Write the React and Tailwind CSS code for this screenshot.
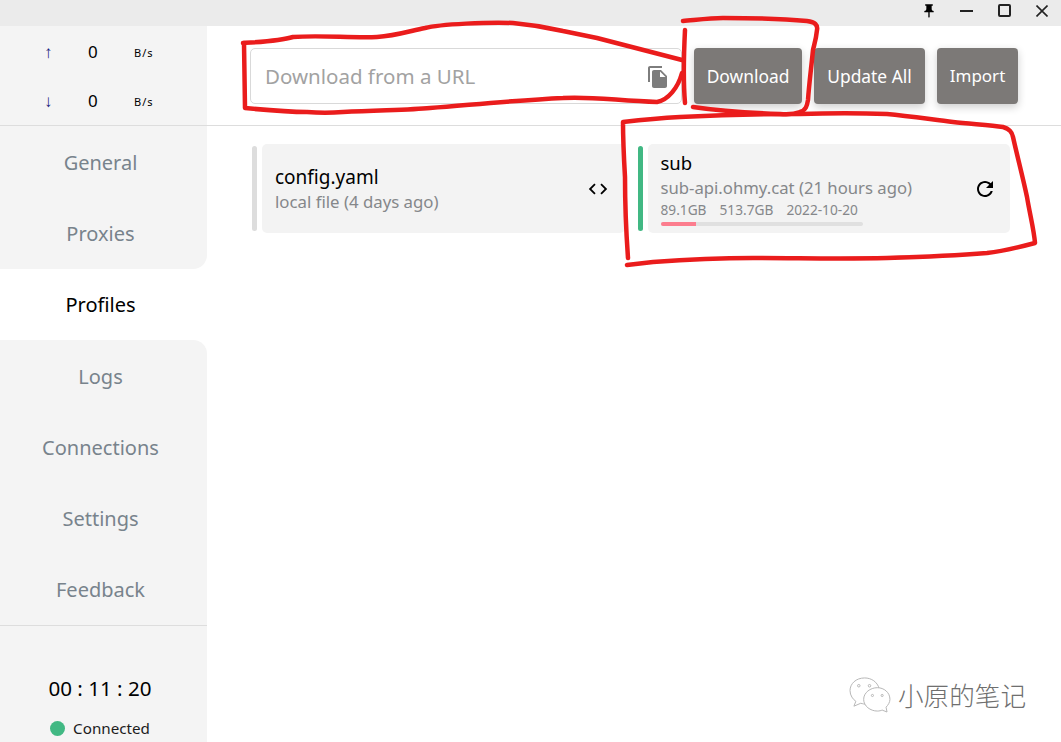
const font = "font-['Noto_Sans','Open_Sans',sans-serif]";

const navItems = [
  { label: "General", className: "bg-[#f4f4f4] text-[#78838c]" },
  { label: "Proxies", className: "bg-[#f4f4f4] text-[#78838c] rounded-br-[14px]" },
  { label: "Profiles", className: "bg-white text-black" },
  { label: "Logs", className: "bg-[#f4f4f4] text-[#78838c] rounded-tr-[14px]" },
  { label: "Connections", className: "bg-[#f4f4f4] text-[#78838c]" },
  { label: "Settings", className: "bg-[#f4f4f4] text-[#78838c]" },
  { label: "Feedback", className: "bg-[#f4f4f4] text-[#78838c]" },
];

function MuiIcon({ d, className }) {
  return (
    <svg viewBox="0 0 24 24" className={className} fill="currentColor">
      <path d={d} />
    </svg>
  );
}

function TrafficRow({ arrow, value }) {
  return (
    <div className="flex items-center h-[49px]">
      <span className="w-[88px] pl-[44px] text-[17px] text-[#1a237e]">{arrow}</span>
      <span className="w-[46px] text-[17px] text-black">{value}</span>
      <span className="pt-[4px] text-[11px] tracking-[1px] text-black">B/s</span>
    </div>
  );
}

function Sidebar() {
  return (
    <div className="w-[207px] shrink-0 flex flex-col bg-white">
      <div className="h-[100px] bg-[#f4f4f4] border-b border-[#dddddd] pt-[1px]">
        <TrafficRow arrow="↑" value="0" />
        <TrafficRow arrow="↓" value="0" />
      </div>
      <div className="flex flex-col">
        {navItems.map((item) => (
          <div
            key={item.label}
            className={`h-[71.3px] flex items-center justify-center pr-[6px] pt-[2px] text-[20px] ${item.className}`}
          >
            {item.label}
          </div>
        ))}
      </div>
      <div className="flex-1 bg-[#f4f4f4] border-t border-[#dddddd] flex flex-col items-center pr-[7px] pt-[48px]">
        <div className="text-[20.6px] text-black leading-[28px]">00 : 11 : 20</div>
        <div className="flex items-center gap-[8px] mt-[15px] text-[15.2px] text-[#1c1c1c] leading-[22px]">
          <span className="w-[15px] h-[15px] rounded-full bg-[#41b883]" />
          Connected
        </div>
      </div>
    </div>
  );
}

function ProfileCard({ barColor, children, action }) {
  return (
    <div className="flex gap-[5px] h-[89px]">
      <div className={`w-[5px] my-[2px] rounded-[3px] ${barColor}`} />
      <div className="flex-1 flex items-center justify-between bg-[#f3f3f3] rounded-[5px] pl-[13px] pr-[13px]">
        <div>{children}</div>
        {action}
      </div>
    </div>
  );
}

function Scribbles() {
  return (
    <svg viewBox="0 0 1061 742" className="absolute inset-0 w-[1061px] h-[742px] pointer-events-none" fill="none" stroke="#ea1c1c" strokeWidth="4.5" strokeLinecap="round" strokeLinejoin="round">
      <path d="M243 43 C260 42 280 41 293 37 C320 35 350 38 377 37 C395 36 410 31 425 28 C440 24 490 22 513 23 C535 25 550 28 563 31 L597 38 L682 60" />
      <path d="M244 43 L245 108 C265 110 290 112 307 112 C320 113 330 113 343 112 C380 110 410 110 430 108 C480 104 520 100 563 98 C590 96 620 101 657 102 C668 100 678 88 682 73" />
      <path d="M685 30 C684 50 683 80 685 103" />
      <path d="M683 21 C695 20 710 18 723 18 C750 18 785 19 807 21 C815 22 818 25 817 30 C816 40 814 45 813 50 C811 70 809 85 808 100 C807 106 806 110 800 112 C795 114 790 115 780 114 C750 113 720 111 693 107" />
      <path d="M628 258 C626 230 625 200 625 177 C624 160 623 140 623 122 C640 120 660 118 680 117 C720 115 760 114 800 114 C830 113 860 113 887 114 C910 116 935 120 953 122 C970 124 990 125 1003 127 C1010 129 1012 132 1013 137 C1017 155 1023 178 1027 197 C1030 215 1034 230 1035 243 C1020 247 1005 251 987 253 C950 256 920 257 887 258 C840 259 800 258 753 258 C720 258 680 260 653 262 L627 265" />
    </svg>
  );
}

function Watermark() {
  return (
    <div className="absolute left-[848px] top-[676px] flex items-center gap-[7px]">
      <svg viewBox="0 0 44 38" className="w-[43px] h-[37px]" fill="none" stroke="#b5b5b5" strokeWidth="1">
        <path d="M32 13 C30 6 24 2 17 2 C8 2 2 8 2 15 C2 20 5 24 8 26 L6 31 L13 28 C15 28.500 17 29 18 29" fill="white" />
        <path d="M43 24 C43 17 37 12 30 12 C23 12 16 17 16 24 C16 31 23 36 30 36 C32 36 34 35.500 35 35 L40 37 L39 32 C41 30 43 27 43 24 Z" fill="white" />
        <circle cx="11" cy="10" r="1.300" />
        <circle cx="22" cy="10" r="1.300" />
        <circle cx="25" cy="20" r="1.100" />
        <circle cx="35" cy="20" r="1.100" />
      </svg>
      <span className="text-[25.6px] leading-[32px] font-light text-[#6f6f6f] font-['Noto_Sans_CJK_SC',sans-serif]">小原的笔记</span>
    </div>
  );
}

export default function App() {
  return (
    <div className={`relative w-[1061px] h-[742px] overflow-hidden bg-white flex flex-col ${font}`}>
      <div className="h-[26px] shrink-0 bg-[#ebebeb] flex items-center justify-end pb-[5px] text-black">
        <MuiIcon className="w-[16px] h-[16px] mr-[23px]" d="M16 9V4h1c.55 0 1-.45 1-1s-.45-1-1-1H7c-.55 0-1 .45-1 1s.45 1 1 1h1v5c0 1.66-1.34 3-3 3v2h5.97v7l1 1 1-1v-7H19v-2c-1.66 0-3-1.34-3-3z" />
        <div className="w-[13px] h-[2px] bg-[#222222] mr-[25px]" />
        <div className="w-[13px] h-[13px] border-2 border-[#222222] rounded-[2px] mr-[25px]" />
        <svg viewBox="0 0 12 12" className="w-[12px] h-[12px] mr-[13px]" stroke="#222222" strokeWidth="1.600">
          <path d="M0.500 0.500 L11.500 11.500 M11.500 0.500 L0.500 11.500" />
        </svg>
      </div>

      <div className="flex-1 flex min-h-0">
        <Sidebar />
        <div className="flex-1 flex flex-col min-w-0">
          <div className="h-[100px] shrink-0 border-b border-[#dddddd] flex gap-[12px] pl-[43px] pr-[43px] pt-[22px]">
            <div className="w-[432px] h-[56px] border border-[#d9d9d9] rounded-[5px] flex items-center justify-between pl-[14px] pr-[11px] pt-[1px]">
              <span className="text-[20.5px] text-[#a2a2a2]">Download from a URL</span>
              <MuiIcon className="w-[24px] h-[24px] text-[#7d7d7d]" d="M16 1H4c-1.1 0-2 .9-2 2v14h2V3h12V1zm-1 4 6 6v10c0 1.1-.9 2-2 2H7.99C6.89 23 6 22.1 6 21l.01-14c0-1.1.89-2 1.99-2h7zm-1 7h5.5L14 6.500V12z" />
            </div>
            <button className="w-[108px] h-[56px] rounded-[4px] bg-[#7c7977] text-white text-[17.4px] shadow-[0_3px_8px_rgba(0,0,0,0.2)]">Download</button>
            <button className="w-[111px] h-[56px] rounded-[4px] bg-[#7c7977] text-white text-[17.4px] shadow-[0_3px_8px_rgba(0,0,0,0.2)]">Update All</button>
            <button className="w-[81px] h-[56px] rounded-[4px] bg-[#7c7977] text-white text-[17px] shadow-[0_3px_8px_rgba(0,0,0,0.2)]">Import</button>
          </div>

          <div className="grid grid-cols-2 gap-[13px] pl-[45px] pr-[51px] pt-[18px]">
            <ProfileCard
              barColor="bg-[#dddddd]"
              action={
                <MuiIcon className="w-[22px] h-[22px] mr-[3px] text-black" d="M9.400 16.600 4.800 12l4.600-4.600L8 6l-6 6 6 6 1.400-1.400zm5.200 0 4.600-4.600-4.600-4.600L16 6l6 6-6 6-1.400-1.400z" />
              }
            >
              <div className="text-[19px] leading-[26px] text-black">config.yaml</div>
              <div className="text-[16.8px] leading-[24px] text-[#85878a]">local file (4 days ago)</div>
            </ProfileCard>
            <ProfileCard
              barColor="bg-[#41b883]"
              action={
                <MuiIcon className="w-[24px] h-[24px] text-black" d="M17.650 6.350C16.200 4.900 14.210 4 12 4c-4.420 0-7.990 3.580-7.990 8s3.570 8 7.990 8c3.730 0 6.840-2.550 7.730-6h-2.080c-.82 2.330-3.040 4-5.650 4-3.310 0-6-2.690-6-6s2.690-6 6-6c1.660 0 3.140.69 4.220 1.780L13 11h7V4l-2.350 2.350z" />
              }
            >
              <div className="w-[202px]">
                <div className="text-[18.5px] leading-[24px] text-black">sub</div>
                <div className="text-[16.7px] leading-[26px] whitespace-nowrap text-[#85878a]">sub-api.ohmy.cat (21 hours ago)</div>
                <div className="flex gap-[13px] text-[13.7px] leading-[18px] text-[#85878a] whitespace-nowrap">
                  <span>89.1GB</span>
                  <span>513.7GB</span>
                  <span>2022-10-20</span>
                </div>
                <div className="h-[4px] mt-[3px] rounded-full bg-[#e0e0e0] overflow-hidden">
                  <div className="h-full w-[35px] bg-[#fc7d8e]" />
                </div>
              </div>
            </ProfileCard>
          </div>
        </div>
      </div>

      <Scribbles />
      <Watermark />
    </div>
  );
}
